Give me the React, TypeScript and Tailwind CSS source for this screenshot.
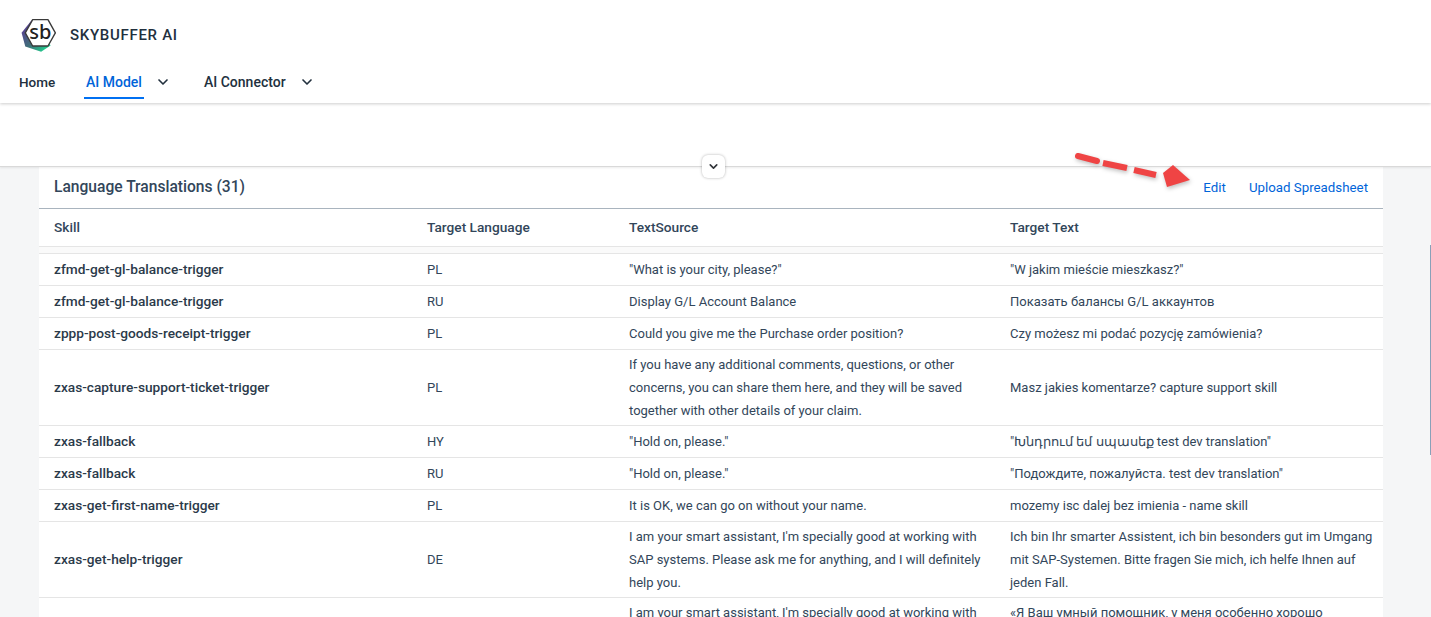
import { ChevronDown } from "lucide-react";

const rows = [
  { skill: "zfmd-get-gl-balance-trigger", lang: "PL", source: '"What is your city, please?"', target: '"W jakim mieście mieszkasz?"' },
  { skill: "zfmd-get-gl-balance-trigger", lang: "RU", source: "Display G/L Account Balance", target: "Показать балансы G/L аккаунтов" },
  { skill: "zppp-post-goods-receipt-trigger", lang: "PL", source: "Could you give me the Purchase order position?", target: "Czy możesz mi podać pozycję zamówienia?" },
  {
    skill: "zxas-capture-support-ticket-trigger",
    lang: "PL",
    source: "If you have any additional comments, questions, or other concerns, you can share them here, and they will be saved together with other details of your claim.",
    target: "Masz jakies komentarze? capture support skill",
  },
  { skill: "zxas-fallback", lang: "HY", source: '"Hold on, please."', target: '"Խնդրում եմ սպասեք test dev translation"' },
  { skill: "zxas-fallback", lang: "RU", source: '"Hold on, please."', target: '"Подождите, пожалуйста. test dev translation"' },
  { skill: "zxas-get-first-name-trigger", lang: "PL", source: "It is OK, we can go on without your name.", target: "mozemy isc dalej bez imienia - name skill" },
  {
    skill: "zxas-get-help-trigger",
    lang: "DE",
    source: "I am your smart assistant, I'm specially good at working with SAP systems. Please ask me for anything, and I will definitely help you.",
    target: "Ich bin Ihr smarter Assistent, ich bin besonders gut im Umgang mit SAP-Systemen. Bitte fragen Sie mich, ich helfe Ihnen auf jeden Fall.",
  },
  {
    skill: "",
    lang: "",
    source: "I am your smart assistant, I'm specially good at working with SAP systems. Please ask me for anything, and I will definitely help you.",
    target: "«Я Ваш умный помощник, у меня особенно хорошо получается работать с системами SAP. Просите меня о чём угодно.",
  },
];

const cols = "grid grid-cols-[373px_202px_381px_1fr]";

function Logo() {
  return (
    <svg width="38" height="38" viewBox="0 0 36 36" className="shrink-0">
      <defs>
        <linearGradient id="sbGrad" x1="0" y1="0.2" x2="0.8" y2="1">
          <stop offset="0" stopColor="#5b3a96" />
          <stop offset="0.55" stopColor="#3f6f78" />
          <stop offset="1" stopColor="#1fd28f" />
        </linearGradient>
      </defs>
      <path d="M11 3 L1.5 15 L5 28 L20 33 L29 27 L14 6 Z" fill="url(#sbGrad)" />
      <path d="M12 2.5 H26.5 L33.5 15 L26.5 27.5 H12 L5 15 Z" fill="#fff" stroke="#3a3a3a" strokeWidth="1.3" strokeLinejoin="round" />
      <text x="19.2" y="21" textAnchor="middle" fontSize="19" fontWeight="500" fill="#222" fontFamily="'Noto Sans', sans-serif">
        sb
      </text>
    </svg>
  );
}

function Arrow() {
  return (
    <svg width="122" height="40" viewBox="0 0 122 40" className="absolute left-[1072px] top-[150px] z-30 drop-shadow-[1px_2px_2px_rgba(0,0,0,0.25)]">
      <path d="M6 6 L25 11" stroke="#ef4444" strokeWidth="6" strokeLinecap="round" />
      <path d="M31 13 L55 18" stroke="#ef4444" strokeWidth="6" />
      <path d="M62 20 L84 25" stroke="#ef4444" strokeWidth="6" />
      <path d="M101 15 L91 23 L95 37 L118 30 Z" fill="#ef4444" />
    </svg>
  );
}

export default function App() {
  return (
    <div className="relative h-[617px] w-[1431px] overflow-hidden bg-[#f5f6f7] font-['Roboto',sans-serif] text-[#32363a]">
      <header className="relative z-20 h-[103px] bg-white shadow-[0_1px_3px_rgba(0,0,0,0.2)]">
        <div className="flex h-[66px] items-center gap-[12px] pl-[20px] pt-[5px]">
          <Logo />
          <span className="text-[15px] font-medium tracking-[0.7px] text-[#22303e]">SKYBUFFER AI</span>
        </div>
        <nav className="flex items-start pl-[19px] text-[14px] font-medium text-[#22303e]">
          <span className="mt-[6px] w-[65px] text-[13.5px]">Home</span>
          <span className="h-[33px] w-[60px] border-b-2 border-[#0070f2] pt-[6px] text-center text-[#0064d9]">AI Model</span>
          <ChevronDown size={16} strokeWidth={2.5} className="ml-[11px] mt-[8px]" />
          <span className="ml-[33px] mt-[6px]">AI Connector</span>
          <ChevronDown size={16} strokeWidth={2.5} className="ml-[13px] mt-[8px]" />
        </nav>
      </header>

      <div className="relative z-10 h-[64px] border-b border-[#d9d9d9] bg-white shadow-[0_1px_2px_rgba(0,0,0,0.08)]" />

      <button className="absolute left-[702px] top-[155px] z-20 flex h-[23px] w-[23px] items-center justify-center rounded-md bg-white shadow-[0_0_3px_rgba(0,0,0,0.3)]">
        <ChevronDown size={13} strokeWidth={3} />
      </button>

      <section className="mx-[39px] w-[1344px] bg-white">
        <div className="flex h-[42px] items-center justify-between border-b border-[#a9b4be] pl-[15px] pr-[15px]">
          <h2 className="text-[15.6px] font-medium text-[#32465a]">Language Translations (31)</h2>
          <div className="flex gap-[23px] text-[13.3px] text-[#0064d9]">
            <span>Edit</span>
            <span>Upload Spreadsheet</span>
          </div>
        </div>
        <div className={`${cols} h-[38px] items-center border-b border-[#e5e5e5] pl-[15px] text-[13.7px] font-medium text-[#32465a]`}>
          <span>Skill</span>
          <span>Target Language</span>
          <span>TextSource</span>
          <span>Target Text</span>
        </div>
        <div className="h-[7px] border-b border-[#e5e5e5] bg-[#fafafa]" />
        {rows.map((row, i) => (
          <div
            key={i}
            className={`${cols} min-h-[32px] items-center border-b border-[#e5e5e5] py-[3px] pl-[15px] pr-[8px] text-[13px] leading-[23px] text-[#32465a]`}
          >
            <span className="text-[13.7px] font-medium text-[#2b3a4a]">{row.skill}</span>
            <span>{row.lang}</span>
            <span className="pr-[20px]">{row.source}</span>
            <span>{row.target}</span>
          </div>
        ))}
      </section>

      <div className="absolute right-0 top-[245px] h-[210px] w-px bg-[#8aa0b8]" />
      <Arrow />
    </div>
  );
}
